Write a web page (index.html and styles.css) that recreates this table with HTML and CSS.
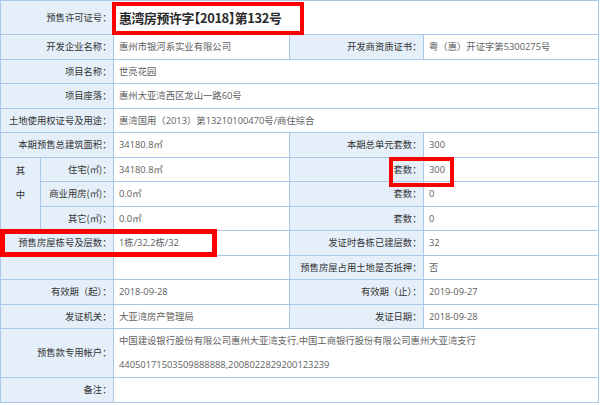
FILE: index.html
```html
<!DOCTYPE html>
<html lang="zh-CN">
<head>
<meta charset="utf-8">
<title>预售许可证</title>
<link rel="stylesheet" href="styles.css">
</head>
<body>
<div class="sheet">
  <table class="permit">
    <colgroup>
      <col class="c-group">
      <col class="c-sub">
      <col class="c-val1">
      <col class="c-lab2">
      <col class="c-val2">
    </colgroup>
    <tr class="row-title">
      <th colspan="2">预售许可证号：</th>
      <td colspan="3" class="title">惠湾房预许字【2018】第132号</td>
    </tr>
    <tr>
      <th colspan="2">开发企业名称：</th>
      <td>惠州市银河系实业有限公司</td>
      <th>开发商资质证书：</th>
      <td>粤（惠）开证字第5300275号</td>
    </tr>
    <tr>
      <th colspan="2">项目名称：</th>
      <td colspan="3">世亮花园</td>
    </tr>
    <tr>
      <th colspan="2">项目座落：</th>
      <td colspan="3">惠州大亚湾西区龙山一路60号</td>
    </tr>
    <tr>
      <th colspan="2">土地使用权证号及用途：</th>
      <td colspan="3">惠湾国用（2013）第13210100470号/商住综合</td>
    </tr>
    <tr>
      <th colspan="2">本期预售总建筑面积：</th>
      <td>34180.8㎡</td>
      <th>本期总单元套数：</th>
      <td>300</td>
    </tr>
    <tr>
      <th rowspan="3" class="group">其<br>中</th>
      <th>住宅(㎡)：</th>
      <td>34180.8㎡</td>
      <th>套数：</th>
      <td>300</td>
    </tr>
    <tr>
      <th>商业用房(㎡)：</th>
      <td>0.0㎡</td>
      <th>套数：</th>
      <td>0</td>
    </tr>
    <tr>
      <th>其它(㎡)：</th>
      <td>0.0㎡</td>
      <th>套数：</th>
      <td>0</td>
    </tr>
    <tr>
      <th colspan="2">预售房屋栋号及层数：</th>
      <td>1栋/32,2栋/32</td>
      <th>发证时各栋已建层数：</th>
      <td>32</td>
    </tr>
    <tr>
      <th colspan="2"></th>
      <td></td>
      <th>预售房屋占用土地是否抵押：</th>
      <td>否</td>
    </tr>
    <tr>
      <th colspan="2">有效期（起）：</th>
      <td>2018-09-28</td>
      <th>有效期（止）：</th>
      <td>2019-09-27</td>
    </tr>
    <tr>
      <th colspan="2">发证机关：</th>
      <td>大亚湾房产管理局</td>
      <th>发证日期：</th>
      <td>2018-09-28</td>
    </tr>
    <tr class="row-multi">
      <th colspan="2">预售款专用帐户：</th>
      <td colspan="3">中国建设银行股份有限公司惠州大亚湾支行,中国工商银行股份有限公司惠州大亚湾支行<br>44050171503509888888,2008022829200123239</td>
    </tr>
    <tr>
      <th colspan="2">备注：</th>
      <td colspan="3"></td>
    </tr>
  </table>
  <div class="mark mark-title"></div>
  <div class="mark mark-count"></div>
  <div class="mark mark-floors"></div>
</div>
</body>
</html>
```
FILE: styles.css
```css
html, body {
  margin: 0;
  padding: 0;
  background: #ffffff;
}

body {
  font-family: "Noto Sans CJK SC", "Noto Sans", sans-serif;
  font-size: 9.33px;
}

.sheet {
  position: relative;
  width: 598px;
}

.permit {
  border-collapse: collapse;
  table-layout: fixed;
  width: 598px;
}

.c-group { width: 40px; }
.c-sub { width: 73px; }
.c-val1 { width: 176px; }
.c-lab2 { width: 134px; }
.c-val2 { width: 175px; }

.permit th,
.permit td {
  border: 1px solid #a9c7e6;
  line-height: 23.5px;
  height: 23.5px;
  padding: 0 5px;
  white-space: nowrap;
  overflow: hidden;
  box-sizing: border-box;
}

.permit th {
  font-family: "Noto Sans CJK JP", "Noto Sans CJK SC", sans-serif;
  background: #e5eff9;
  color: #333333;
  font-weight: normal;
  text-align: right;
  padding-right: 1.5px;
}

.permit td {
  font-family: "Open Sans", "Noto Sans CJK SC", sans-serif;
  background: #ffffff;
  color: #606060;
  text-align: left;
}

.row-title th,
.row-title td {
  line-height: 33px;
  height: 33px;
}

.permit td.title {
  font-family: "Noto Sans CJK SC", sans-serif;
  font-size: 12.9px;
  letter-spacing: -0.4px;
  font-weight: bold;
  color: #2a2a2a;
  font-feature-settings: "halt";
}

.permit th.group {
  text-align: center;
  vertical-align: top;
  padding: 0;
  line-height: 24.5px;
}

.row-multi td {
  line-height: 24px;
}

.mark {
  position: absolute;
  border: 4px solid #ff0000;
  box-sizing: border-box;
}

.mark-title {
  left: 112px;
  top: 2px;
  width: 192px;
  height: 33px;
}

.mark-count {
  left: 389px;
  top: 157px;
  width: 65px;
  height: 30px;
  border-width: 4.5px;
}

.mark-floors {
  left: 0;
  top: 229px;
  width: 217px;
  height: 28px;
  border-width: 5px;
}
```
